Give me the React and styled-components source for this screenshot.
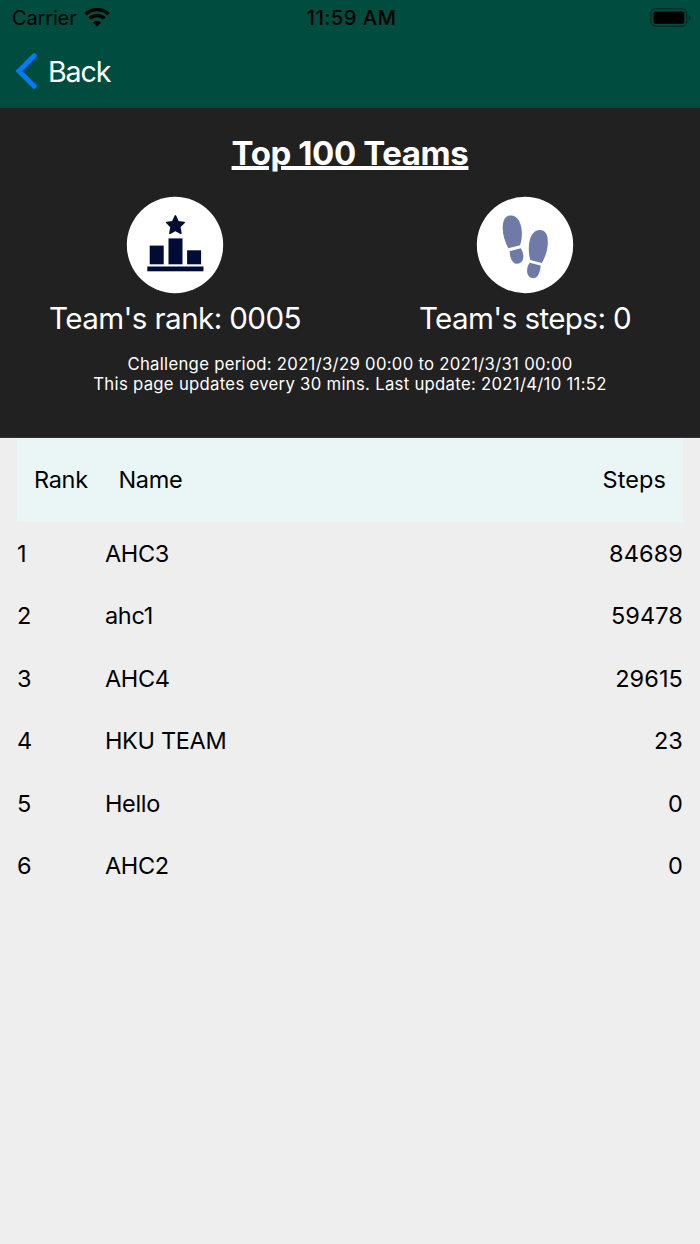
import React from "react";
import styled, { createGlobalStyle } from "styled-components";

const GlobalStyle = createGlobalStyle`
  * {
    box-sizing: border-box;
  }
  body {
    margin: 0;
    background-color: #eeeeee;
    font-family: Inter, "Liberation Sans", sans-serif;
  }
`;

const Screen = styled.div`
  width: 700px;
  height: 1244px;
  display: flex;
  flex-direction: column;
  overflow: hidden;
  background-color: #eeeeee;
`;

const Header = styled.header`
  height: 108px;
  background-color: #004d40;
`;

const StatusBar = styled.div`
  height: 36px;
  display: grid;
  grid-template-columns: 1fr auto 1fr;
  align-items: center;
  padding: 0 9px 0 12px;
  font-size: 20px;
  line-height: 36px;
  color: #000;
`;

const Carrier = styled.div`
  display: flex;
  align-items: center;
  gap: 7px;
  letter-spacing: -0.15px;
`;

const Clock = styled.div`
  font-size: 20.3px;
  font-weight: 500;
  letter-spacing: 0.4px;
`;

const Battery = styled.svg`
  justify-self: end;
`;

const BackButton = styled.button`
  display: flex;
  align-items: center;
  gap: 11px;
  height: 70px;
  padding: 0 0 0 15px;
  border: none;
  background: none;
  color: #fff;
  font-family: inherit;
  font-size: 28.6px;
  letter-spacing: -1.1px;
`;

const Summary = styled.section`
  height: 330px;
  display: flex;
  flex-direction: column;
  align-items: center;
  padding-top: 24px;
  border-bottom: 1px solid #333;
  background-color: #212121;
  color: #fff;
`;

const Title = styled.h1`
  margin: 0;
  font-size: 33px;
  line-height: 42px;
  font-weight: 700;
  letter-spacing: -0.4px;
  text-decoration: underline;
  text-decoration-thickness: 3.5px;
  text-underline-offset: 1px;
`;

const Stats = styled.div`
  width: 100%;
  display: flex;
  margin-top: 22px;
`;

const Stat = styled.div`
  flex: 1;
  display: flex;
  flex-direction: column;
  align-items: center;
`;

const StatLabel = styled.div`
  height: 50px;
  font-size: 29.6px;
  line-height: 48px;
  letter-spacing: -0.6px;
`;

const Notes = styled.div`
  margin-top: 10px;
  text-align: center;
`;

const Note = styled.div`
  font-size: 16.7px;
  line-height: 20px;
  letter-spacing: 0.3px;
`;

const Table = styled.section`
  margin: 0 17px;
  font-size: 23.5px;
  color: #000;
`;

const TableHead = styled.div`
  height: 84px;
  display: flex;
  align-items: center;
  padding: 0 17px 2px;
  background-color: #eaf6f6;
  letter-spacing: -0.3px;
`;

const Row = styled.div`
  height: 62.5px;
  display: flex;
  align-items: center;
`;

const Rank = styled.div`
  width: ${(props) => props.$width}px;
`;

const Name = styled.div`
  flex: 1;
  letter-spacing: -0.35px;
`;

const Steps = styled.div`
  text-align: right;
  letter-spacing: 0.1px;
`;

const teams = [
  { rank: 1, name: "AHC3", steps: 84689 },
  { rank: 2, name: "ahc1", steps: 59478 },
  { rank: 3, name: "AHC4", steps: 29615 },
  { rank: 4, name: "HKU TEAM", steps: 23 },
  { rank: 5, name: "Hello", steps: 0 },
  { rank: 6, name: "AHC2", steps: 0 },
];

function WifiIcon() {
  return (
    <svg width="26" height="20" viewBox="0 0 26 20">
      <g fill="none" stroke="#000" strokeWidth="3.5">
        <path d="M1.6 6.2a16.2 16.2 0 0 1 22.8 0" />
        <path d="M5.6 10.5a10.4 10.4 0 0 1 14.8 0" />
      </g>
      <path d="M8.8 14.4a6 6 0 0 1 8.4 0L13 18.4z" />
    </svg>
  );
}

function BatteryIcon() {
  return (
    <Battery width="42" height="20" viewBox="0 0 42 20">
      <rect x="1.8" y="0.8" width="36" height="17.5" rx="5" fill="none" stroke="#000" strokeOpacity="0.4" strokeWidth="1.5" />
      <rect x="4.4" y="3.4" width="31" height="12.4" rx="2" />
      <path d="M39.6 6.8q2 1 2 3t-2 3z" fillOpacity="0.45" />
    </Battery>
  );
}

function BackIcon() {
  return (
    <svg width="22" height="36" viewBox="0 0 22 36">
      <path d="M19.2 2.7 3.9 18l15.3 15.3" fill="none" stroke="#007aff" strokeWidth="4.8" strokeLinecap="round" strokeLinejoin="miter" />
    </svg>
  );
}

function PodiumIcon() {
  return (
    <svg width="98" height="98" viewBox="0 0 98 98">
      <circle cx="49" cy="49" r="48.2" fill="#fff" />
      <g fill="#000c36">
        <path
          d="M49.4 19.9 52.1 25.8l6.1.7-4.5 4.4 1.2 6.4-5.5-3.1-5.5 3.1 1.2-6.4-4.5-4.4 6.1-.7z"
          stroke="#000c36"
          strokeWidth="1.6"
          strokeLinejoin="round"
        />
        <rect x="23.7" y="49.6" width="14" height="18.7" />
        <rect x="42.5" y="42.4" width="14" height="25.9" />
        <rect x="61.1" y="54.3" width="14" height="14" />
        <rect x="21.3" y="70.5" width="56.2" height="4.8" />
      </g>
    </svg>
  );
}

function FootstepsIcon() {
  return (
    <svg width="98" height="98" viewBox="0 0 98 98">
      <circle cx="49" cy="49" r="48.2" fill="#fff" />
      <g fill="#6f7aa8">
        <path d="M32.3 52.3C29 46 26.4 38.5 26.7 30.5C27 23.5 30 19.6 34.6 19.6C42 19.6 45.4 27.5 45.8 36C46 41.5 45.4 45.5 44 49.3Z" />
        <path d="M33.6 55.2 44.8 52.3C46.6 55 47.7 58.2 47.3 61.6C46.7 65.6 44.4 67.8 41.3 67.8C37.5 67.8 35 64.2 34.2 60Z" />
        <path d="M54.3 64.1C53 59.5 52.6 55 52.9 50C53.5 41 57 34 64 34C69 34 71.7 38 71.8 45C72 53.5 69.6 60.5 65.9 66.9Z" />
        <path d="M53.7 66.8 64.6 69.6C64.6 73 63.7 76.5 62.2 79C60.4 82 57.5 82.8 55.1 81.8C51.6 80.4 50.8 76.7 51.2 73C51.5 70.5 52.3 68.7 53.7 66.8Z" />
      </g>
    </svg>
  );
}

function App() {
  return (
    <Screen>
      <GlobalStyle />
      <Header>
        <StatusBar>
          <Carrier>
            Carrier
            <WifiIcon />
          </Carrier>
          <Clock>11:59 AM</Clock>
          <BatteryIcon />
        </StatusBar>
        <BackButton>
          <BackIcon />
          Back
        </BackButton>
      </Header>
      <Summary>
        <Title>Top 100 Teams</Title>
        <Stats>
          <Stat>
            <PodiumIcon />
            <StatLabel>Team's rank: 0005</StatLabel>
          </Stat>
          <Stat>
            <FootstepsIcon />
            <StatLabel>Team's steps: 0</StatLabel>
          </Stat>
        </Stats>
        <Notes>
          <Note>Challenge period: 2021/3/29 00:00 to 2021/3/31 00:00</Note>
          <Note>This page updates every 30 mins. Last update: 2021/4/10 11:52</Note>
        </Notes>
      </Summary>
      <Table>
        <TableHead>
          <Rank $width={84.5}>Rank</Rank>
          <Name>Name</Name>
          <Steps>Steps</Steps>
        </TableHead>
        {teams.map((team) => (
          <Row key={team.rank}>
            <Rank $width={88}>{team.rank}</Rank>
            <Name>{team.name}</Name>
            <Steps>{team.steps}</Steps>
          </Row>
        ))}
      </Table>
    </Screen>
  );
}

export default App;
